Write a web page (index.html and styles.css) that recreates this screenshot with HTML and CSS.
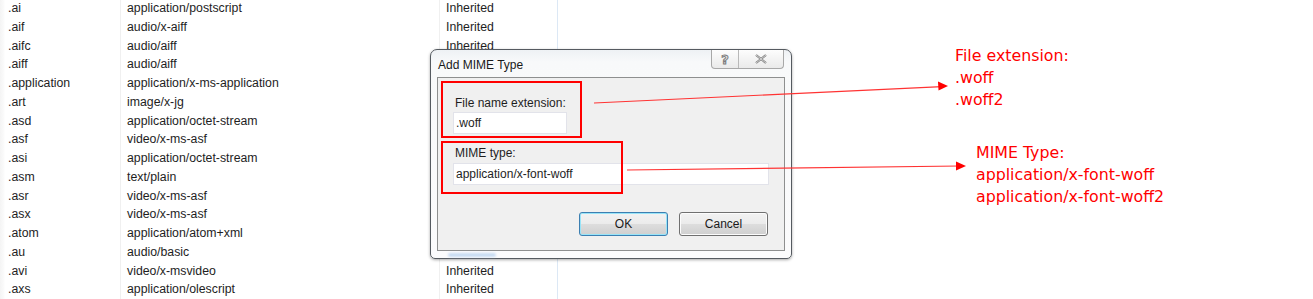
FILE: index.html
```html
<!DOCTYPE html>
<html lang="en">
<head>
  <meta charset="UTF-8">
  <title>MIME Types</title>
  <link rel="stylesheet" href="styles.css">
</head>
<body>
  <div class="list">
    <div class="row"><span class="ext">.ai</span><span class="mime">application/postscript</span><span class="entry">Inherited</span></div>
    <div class="row"><span class="ext">.aif</span><span class="mime">audio/x-aiff</span><span class="entry">Inherited</span></div>
    <div class="row"><span class="ext">.aifc</span><span class="mime">audio/aiff</span><span class="entry">Inherited</span></div>
    <div class="row"><span class="ext">.aiff</span><span class="mime">audio/aiff</span><span class="entry"></span></div>
    <div class="row"><span class="ext">.application</span><span class="mime">application/x-ms-application</span><span class="entry"></span></div>
    <div class="row"><span class="ext">.art</span><span class="mime">image/x-jg</span><span class="entry"></span></div>
    <div class="row"><span class="ext">.asd</span><span class="mime">application/octet-stream</span><span class="entry"></span></div>
    <div class="row"><span class="ext">.asf</span><span class="mime">video/x-ms-asf</span><span class="entry"></span></div>
    <div class="row"><span class="ext">.asi</span><span class="mime">application/octet-stream</span><span class="entry"></span></div>
    <div class="row"><span class="ext">.asm</span><span class="mime">text/plain</span><span class="entry"></span></div>
    <div class="row"><span class="ext">.asr</span><span class="mime">video/x-ms-asf</span><span class="entry"></span></div>
    <div class="row"><span class="ext">.asx</span><span class="mime">video/x-ms-asf</span><span class="entry"></span></div>
    <div class="row"><span class="ext">.atom</span><span class="mime">application/atom+xml</span><span class="entry"></span></div>
    <div class="row"><span class="ext">.au</span><span class="mime">audio/basic</span><span class="entry"></span></div>
    <div class="row"><span class="ext">.avi</span><span class="mime">video/x-msvideo</span><span class="entry">Inherited</span></div>
    <div class="row"><span class="ext">.axs</span><span class="mime">application/olescript</span><span class="entry">Inherited</span></div>
  </div>

  <div class="dialog">
    <div class="titlebar">
      <span class="title">Add MIME Type</span>
      <div class="caption-buttons">
        <span class="cap help">?</span>
        <span class="cap close">
          <svg width="14" height="10" viewBox="0 0 14 10">
            <path d="M2 1 L12 9 M12 1 L2 9" stroke="#7b7b7b" stroke-width="2.2" fill="none"/>
            <path d="M2 1 L12 9 M12 1 L2 9" stroke="#e6e6e6" stroke-width="0.8" fill="none"/>
          </svg>
        </span>
      </div>
    </div>
    <div class="client">
      <div class="field field-ext">
        <label class="label">File name extension:</label>
        <div class="input short">.woff</div>
      </div>
      <div class="field field-mime">
        <label class="label">MIME type:</label>
        <div class="input long">application/x-font-woff</div>
      </div>
      <div class="buttons">
        <button class="btn default">OK</button>
        <button class="btn">Cancel</button>
      </div>
    </div>
    <div class="glow"></div>
  </div>

  <div class="mark mark-ext"></div>
  <div class="mark mark-mime"></div>

  <svg class="arrows" width="1313" height="299" viewBox="0 0 1313 299">
    <line x1="594" y1="103" x2="942" y2="86.6" stroke="#f33" stroke-width="1.2"/>
    <polygon points="948,86 938,81.5 938.5,90.5" fill="#f00"/>
    <line x1="627" y1="170" x2="960" y2="166" stroke="#f33" stroke-width="1.2"/>
    <polygon points="966,166 956,161.5 956,170.5" fill="#f00"/>
  </svg>

  <div class="note note-ext">
    <div>File extension:</div>
    <div>.woff</div>
    <div>.woff2</div>
  </div>
  <div class="note note-mime">
    <div>MIME Type:</div>
    <div>application/x-font-woff</div>
    <div>application/x-font-woff2</div>
  </div>
</body>
</html>
```

FILE: styles.css
```css
body {
  margin: 0;
  width: 1313px;
  height: 299px;
  overflow: hidden;
  background: #ffffff;
  font-family: "Liberation Sans", Arial, sans-serif;
  font-size: 12px;
  color: #1e1e1e;
  position: relative;
}

.list {
  margin-top: -1px;
  width: 559px;
}
.row {
  display: grid;
  grid-template-columns: 121px 319px 118px;
  height: 18.75px;
  line-height: 18.75px;
  font-size: 12.3px;
}
.row span {
  padding-left: 6px;
  white-space: nowrap;
}
.ext {
  padding-left: 8px !important;
  background: linear-gradient(to right, #f4f4f4 0, #fbfbfb 4px, #ffffff 5px);
  border-right: 1px solid #f0f0f0;
}
.mime {
  border-right: 1px solid #f0f0f0;
}
.entry {
  border-right: 1px solid #dce8f5;
}

/* dialog */
.dialog {
  position: absolute;
  left: 430px;
  top: 49px;
  width: 360px;
  height: 208px;
  border: 1px solid #555a60;
  border-radius: 7px 7px 5px 5px;
  background: linear-gradient(to bottom, #eef1f4 0, #f8f9fa 12px, #fbfbfc 100%);
  box-shadow: 0 1px 3px rgba(0, 0, 0, 0.35);
}
.titlebar {
  height: 27px;
  position: relative;
}
.title {
  position: absolute;
  left: 7px;
  top: 8px;
  font-size: 12px;
  color: #1a1a1a;
}
.caption-buttons {
  position: absolute;
  right: 7px;
  top: 0;
  display: flex;
  height: 18px;
  border: 1px solid #a8a8a8;
  border-top: none;
  border-radius: 0 0 4px 4px;
  background: linear-gradient(to bottom, #fdfdfd, #eaeaea);
  overflow: hidden;
}
.cap {
  display: flex;
  align-items: center;
  justify-content: center;
  height: 18px;
}
.help {
  width: 26px;
  border-right: 1px solid #b8b8b8;
  font-family: "DejaVu Sans", sans-serif;
  font-size: 13px;
  font-weight: bold;
  color: #e8e8e8;
  -webkit-text-stroke: 1px #7b7b7b;
}
.close {
  width: 44px;
}

.client {
  position: absolute;
  left: 6px;
  top: 27px;
  width: 346px;
  height: 172px;
  border: 1px solid #8e8f8f;
  background: #f0f0f0;
}
.field {
  position: absolute;
  left: 15px;
}
.field-ext {
  top: 16px;
}
.field-mime {
  top: 66px;
}
.label {
  display: block;
  padding-left: 2px;
  height: 18px;
  line-height: 18px;
}
.input {
  background: #ffffff;
  border: 1px solid #e2e3ea;
  line-height: 20px;
  padding-left: 2px;
  box-sizing: border-box;
  height: 22px;
}
.field-mime .input {
  margin-top: 1px;
}
.short {
  width: 114px;
}
.long {
  width: 316px;
}

.buttons {
  position: absolute;
  right: 16px;
  top: 134px;
  display: flex;
  gap: 11px;
}
.btn {
  width: 89px;
  height: 24px;
  font-family: "Liberation Sans", Arial, sans-serif;
  font-size: 12px;
  color: #1a1a1a;
  border: 1px solid #707070;
  border-radius: 3px;
  background: linear-gradient(to bottom, #f2f2f2 0, #ebebeb 50%, #dddddd 51%, #cfcfcf 100%);
  box-shadow: inset 0 0 0 1px #fcfcfc;
  padding: 0;
}
.btn.default {
  border-color: #3c7fb1;
  box-shadow: inset 0 0 0 1px #98e4f8;
}
.glow {
  position: absolute;
  left: 17px;
  bottom: 1px;
  width: 48px;
  height: 4px;
  border-radius: 2px;
  background: #c9dcf2;
  filter: blur(1px);
}

/* annotations */
.mark {
  position: absolute;
  border: 2px solid #ff0000;
}
.mark-ext {
  left: 441px;
  top: 81px;
  width: 137px;
  height: 53px;
}
.mark-mime {
  left: 441px;
  top: 141px;
  width: 178px;
  height: 49px;
}
.arrows {
  position: absolute;
  left: 0;
  top: 0;
}
.note {
  position: absolute;
  font-family: "DejaVu Sans", Tahoma, sans-serif;
  font-size: 15.8px;
  line-height: 22px;
  color: #ff0000;
}
.note-ext {
  left: 955px;
  top: 45px;
}
.note-mime {
  left: 976px;
  top: 142px;
}
```
